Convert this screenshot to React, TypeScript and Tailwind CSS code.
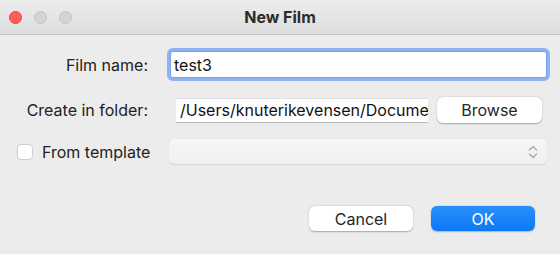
import React from "react";

const font = { fontFamily: "Inter, 'Noto Sans', 'Liberation Sans', sans-serif" };

function TrafficLights() {
  return (
    <div className="flex items-center gap-[12px] pl-[9px]">
      <span className="w-[13px] h-[13px] rounded-full bg-[#fe5f57] border border-[#e2463f]" />
      <span className="w-[13px] h-[13px] rounded-full bg-[#d3d3d3] border border-[#c4c4c4]" />
      <span className="w-[13px] h-[13px] rounded-full bg-[#d3d3d3] border border-[#c4c4c4]" />
    </div>
  );
}

function Chevrons() {
  return (
    <svg width="10" height="16" viewBox="0 0 10 16" fill="none">
      <path d="M1.5 6 L5 2.5 L8.5 6" stroke="#a9a9a9" strokeWidth="1.4" strokeLinecap="round" strokeLinejoin="round" />
      <path d="M1.5 10 L5 13.5 L8.5 10" stroke="#a9a9a9" strokeWidth="1.4" strokeLinecap="round" strokeLinejoin="round" />
    </svg>
  );
}

export default function App() {
  return (
    <div className="w-[560px] h-[254px] bg-[#ececec] text-[#222] text-[16px] overflow-hidden" style={font}>
      {/* title bar */}
      <div className="h-[35px] grid grid-cols-[1fr_auto_1fr] items-center bg-gradient-to-b from-[#ececec] to-[#dedede] border-b border-[#c2c2c2]">
        <TrafficLights />
        <div className="font-bold text-[16px] text-[#2b2b2b] leading-none pb-[1px]">New Film</div>
        <div />
      </div>

      <div className="flex flex-col pt-[13px]">
        {/* film name */}
        <div className="flex items-center h-[33px]">
          <div className="w-[148px] text-right leading-none">Film name:</div>
          <div className="ml-[19px] w-[383px] h-[33px] rounded-[6px] bg-[#8fb3f0] p-[3px]">
            <div className="h-full bg-white rounded-[3px] border border-[#7aa0e6] flex items-center pl-[3px] text-[#111]">
              test3
            </div>
          </div>
        </div>

        {/* folder */}
        <div className="flex items-center mt-[16px] h-[26px]">
          <div className="w-[148px] text-right leading-none">Create in folder:</div>
          <div className="ml-[28px] w-[252px] h-[25px] bg-white border-b border-[#b8b8b8] border-t border-t-[#e0e0e0] flex items-center pl-[4px] overflow-hidden whitespace-nowrap text-[#111]">
            /Users/knuterikevensen/Documents
          </div>
          <div className="ml-[9px] w-[105px] h-[26px] bg-white rounded-[6px] shadow-[0_0.5px_1.5px_rgba(0,0,0,0.3)] flex items-center justify-center text-[#262626]">
            Browse
          </div>
        </div>

        {/* template */}
        <div className="flex items-center mt-[16px] h-[25px]">
          <div className="w-[169px] flex items-center pl-[17px]">
            <div className="w-[16px] h-[16px] rounded-[4px] bg-white border border-[#cfcfcf]" />
            <div className="ml-[9px] leading-none whitespace-nowrap">From template</div>
          </div>
          <div className="w-[378px] h-[25px] rounded-[6px] bg-gradient-to-b from-[#f6f6f6] to-[#f1f1f1] shadow-[0_0.5px_1px_rgba(0,0,0,0.12)] flex items-center justify-end pr-[9px]">
            <Chevrons />
          </div>
        </div>

        {/* buttons */}
        <div className="flex items-center justify-end gap-[18px] mt-[42px] pr-[25px]">
          <div className="w-[104px] h-[25px] bg-white rounded-[6px] shadow-[0_0.5px_1.5px_rgba(0,0,0,0.3)] flex items-center justify-center text-[#262626]">
            Cancel
          </div>
          <div className="w-[104px] h-[25px] rounded-[6px] bg-gradient-to-b from-[#2a8ffd] to-[#0a78f5] shadow-[0_0.5px_1.5px_rgba(0,0,0,0.25)] flex items-center justify-center text-white">
            OK
          </div>
        </div>
      </div>
    </div>
  );
}
